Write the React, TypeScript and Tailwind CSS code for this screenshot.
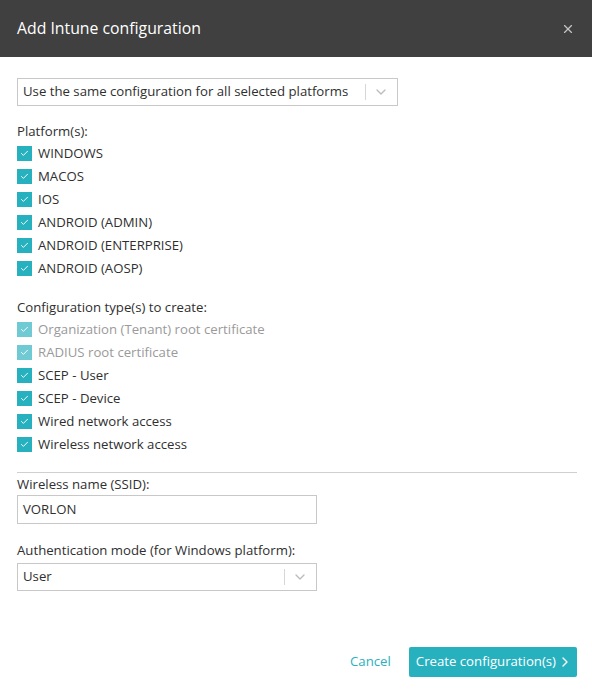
import { Check, ChevronDown, ChevronRight, X } from 'lucide-react';

const platforms = ['WINDOWS', 'MACOS', 'IOS', 'ANDROID (ADMIN)', 'ANDROID (ENTERPRISE)', 'ANDROID (AOSP)'];

const configTypes = [
  { label: 'Organization (Tenant) root certificate', disabled: true },
  { label: 'RADIUS root certificate', disabled: true },
  { label: 'SCEP - User', disabled: false },
  { label: 'SCEP - Device', disabled: false },
  { label: 'Wired network access', disabled: false },
  { label: 'Wireless network access', disabled: false },
];

const CheckRow = ({ label, disabled = false }: { label: string; disabled?: boolean }) => (
  <div className="flex items-center gap-[6px] h-[23px]">
    <span
      className={`w-[15px] h-[15px] flex items-center justify-center ${disabled ? 'bg-[#6fcad3]' : 'bg-[#27b1bf]'}`}
    >
      <Check className="w-[9px] h-[9px] text-white" strokeWidth={2.5} />
    </span>
    <span className={disabled ? 'text-[#9a9a9a]' : 'text-[#2f2f2f]'}>{label}</span>
  </div>
);

const SelectBox = ({ value, width }: { value: string; width: string }) => (
  <div className={`${width} h-[28px] border border-[#c8c8c8] flex items-center pl-[5px] pr-[8px] bg-white`}>
    <span className="flex-1 text-[#2f2f2f] truncate">{value}</span>
    <span className="w-px h-[16px] bg-[#d6d6d6] mr-[7px]" />
    <ChevronDown className="w-[16px] h-[16px] text-[#bcbcbc]" strokeWidth={2} />
  </div>
);

export default function App() {
  return (
    <div
      className="w-[592px] h-[694px] bg-white flex flex-col text-[13.2px]"
      style={{ fontFamily: '"Open Sans", "Noto Sans", sans-serif' }}
    >
      {/* Header */}
      <div className="h-[57px] bg-[#404040] flex items-center justify-between pl-[17px] pr-[17px] shrink-0">
        <h1 className="text-white text-[15.8px]">Add Intune configuration</h1>
        <X className="w-[14px] h-[14px] text-[#c4c4c4]" strokeWidth={2} />
      </div>

      <div className="flex-1 flex flex-col pl-[17px] pr-[15px] pt-[21px]">
        <SelectBox value="Use the same configuration for all selected platforms" width="w-[381px]" />

        <div className="mt-[14px] text-[#2f2f2f] leading-[22px]">Platform(s):</div>
        <div className="flex flex-col">
          {platforms.map((p) => (
            <CheckRow key={p} label={p} />
          ))}
        </div>

        <div className="mt-[16px] text-[#2f2f2f] leading-[22px]">Configuration type(s) to create:</div>
        <div className="flex flex-col">
          {configTypes.map((c) => (
            <CheckRow key={c.label} label={c.label} disabled={c.disabled} />
          ))}
        </div>

        <div className="mt-[16px] border-t border-[#d0d0d0]" />

        <div className="text-[#2f2f2f] leading-[22px]">Wireless name (SSID):</div>
        <div className="w-[300px] h-[29px] border border-[#c8c8c8] flex items-center px-[5px] text-[#2f2f2f]">
          VORLON
        </div>

        <div className="mt-[15px] mb-[2px] text-[#2f2f2f] leading-[22px]">Authentication mode (for Windows platform):</div>
        <SelectBox value="User" width="w-[300px]" />

        <div className="mt-auto mb-[17px] flex items-center justify-end gap-[18px]">
          <button className="text-[#2ab1c0]">Cancel</button>
          <button className="h-[30px] bg-[#27b1bf] text-white rounded-[2px] pl-[7px] pr-[4px] flex items-center gap-[1px] text-[13.2px]">
            Create configuration(s)
            <ChevronRight className="w-[16px] h-[16px]" strokeWidth={2} />
          </button>
        </div>
      </div>
    </div>
  );
}
